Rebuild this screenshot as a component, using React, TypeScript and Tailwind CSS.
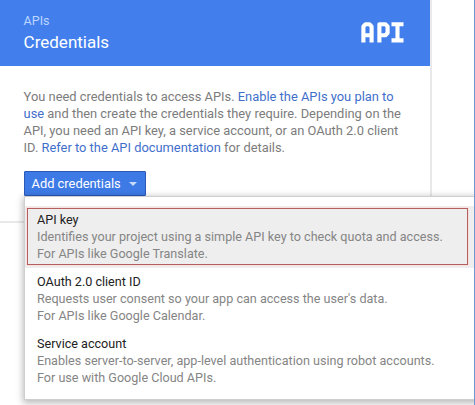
const options = [
  {
    title: 'API key',
    lines: ['Identifies your project using a simple API key to check quota and access.', 'For APIs like Google Translate.'],
    selected: true,
  },
  {
    title: 'OAuth 2.0 client ID',
    lines: ["Requests user consent so your app can access the user's data.", 'For APIs like Google Calendar.'],
  },
  {
    title: 'Service account',
    lines: ['Enables server-to-server, app-level authentication using robot accounts.', 'For use with Google Cloud APIs.'],
  },
];

function ApiLogo() {
  return (
    <svg className="mt-[22px] h-[21px] w-[43px]" viewBox="0 0 43 21" fill="none" stroke="#fff" strokeWidth="4.1" strokeLinejoin="round" role="img" aria-label="API">
      <path d="M2.4 20.4V4.4L4.6 2.2H8.4L10.6 4.4V20.4M2.4 13.2H10.6" />
      <path d="M18.4 20.4V2.2H24.4L26.6 4.4V11L24.4 13.2H18.4" />
      <path d="M30.5 2.2H42.5M36.5 2.2V18.4M30.5 18.4H42.5" />
    </svg>
  );
}

function Menu() {
  return (
    <ul className="absolute top-[25px] left-0 h-[204px] w-[470px] border border-[#cfcfcf] bg-white pt-[9px] text-[12.6px] shadow-[0_2px_7px_1px_rgba(0,0,0,0.28)]">
      {options.map((o) => (
        <li key={o.title} className={`relative h-[62px] pt-[4px] pl-[12px] ${o.selected ? 'bg-[#eeeeee]' : ''}`}>
          {o.selected && <span className="absolute top-[2px] left-[1.5px] h-[57px] w-[441px] border border-[#b3605f] shadow-[0_0_0_1px_#f8e0e0]" />}
          <div className="relative h-[18px] pt-px leading-[18px] text-[#222]">{o.title}</div>
          {o.lines.map((l) => (
            <div key={l} className="relative leading-[17px] whitespace-nowrap text-[#858585]">{l}</div>
          ))}
        </li>
      ))}
    </ul>
  );
}

export default function App() {
  return (
    <div className="relative flex h-[405px] w-[475px] overflow-hidden border-r border-[#6b99d0] bg-white font-['Roboto',sans-serif] text-[12.88px]">
      <div className="h-[223px] w-[432px] shrink-0 border-r-2 border-b-2 border-[#e9e9e9]">
        <header className="flex h-[66px] justify-between bg-[#427fed] pr-[26px] pl-[23.6px] text-white">
          <div>
            <div className="mt-[13px] text-[12.5px] leading-[16px] text-[#bdd6fb]">APIs</div>
            <h1 className="mt-[2px] text-[17px] leading-[22px]">Credentials</h1>
          </div>
          <ApiLogo />
        </header>
        <main className="pt-[22px] pl-[23px]">
          <p className="pl-[0.6px] leading-[17px] whitespace-nowrap text-[#7c7c7c]">
            You need credentials to access APIs. <a className="text-[#3f6fcb]">Enable the APIs you plan to</a>
            <br />
            <a className="text-[#3f6fcb]">use</a> and then create the credentials they require. Depending on the
            <br />
            API, you need an API key, a service account, or an OAuth 2.0 client
            <br />
            ID. <a className="text-[#3f6fcb]">Refer to the API documentation</a> for details.
          </p>
          <div className="relative mt-[15px] ml-px">
            <button className="flex h-[25px] w-[122px] items-center justify-between rounded-[1px] border border-[#2a59b8] bg-[#3d7ae6] pr-[8px] pl-[6.5px] text-white">
              Add credentials
              <span className="border-x-4 border-t-4 border-x-transparent border-t-[#c6dafa]" />
            </button>
            <Menu />
          </div>
        </main>
      </div>
    </div>
  );
}
